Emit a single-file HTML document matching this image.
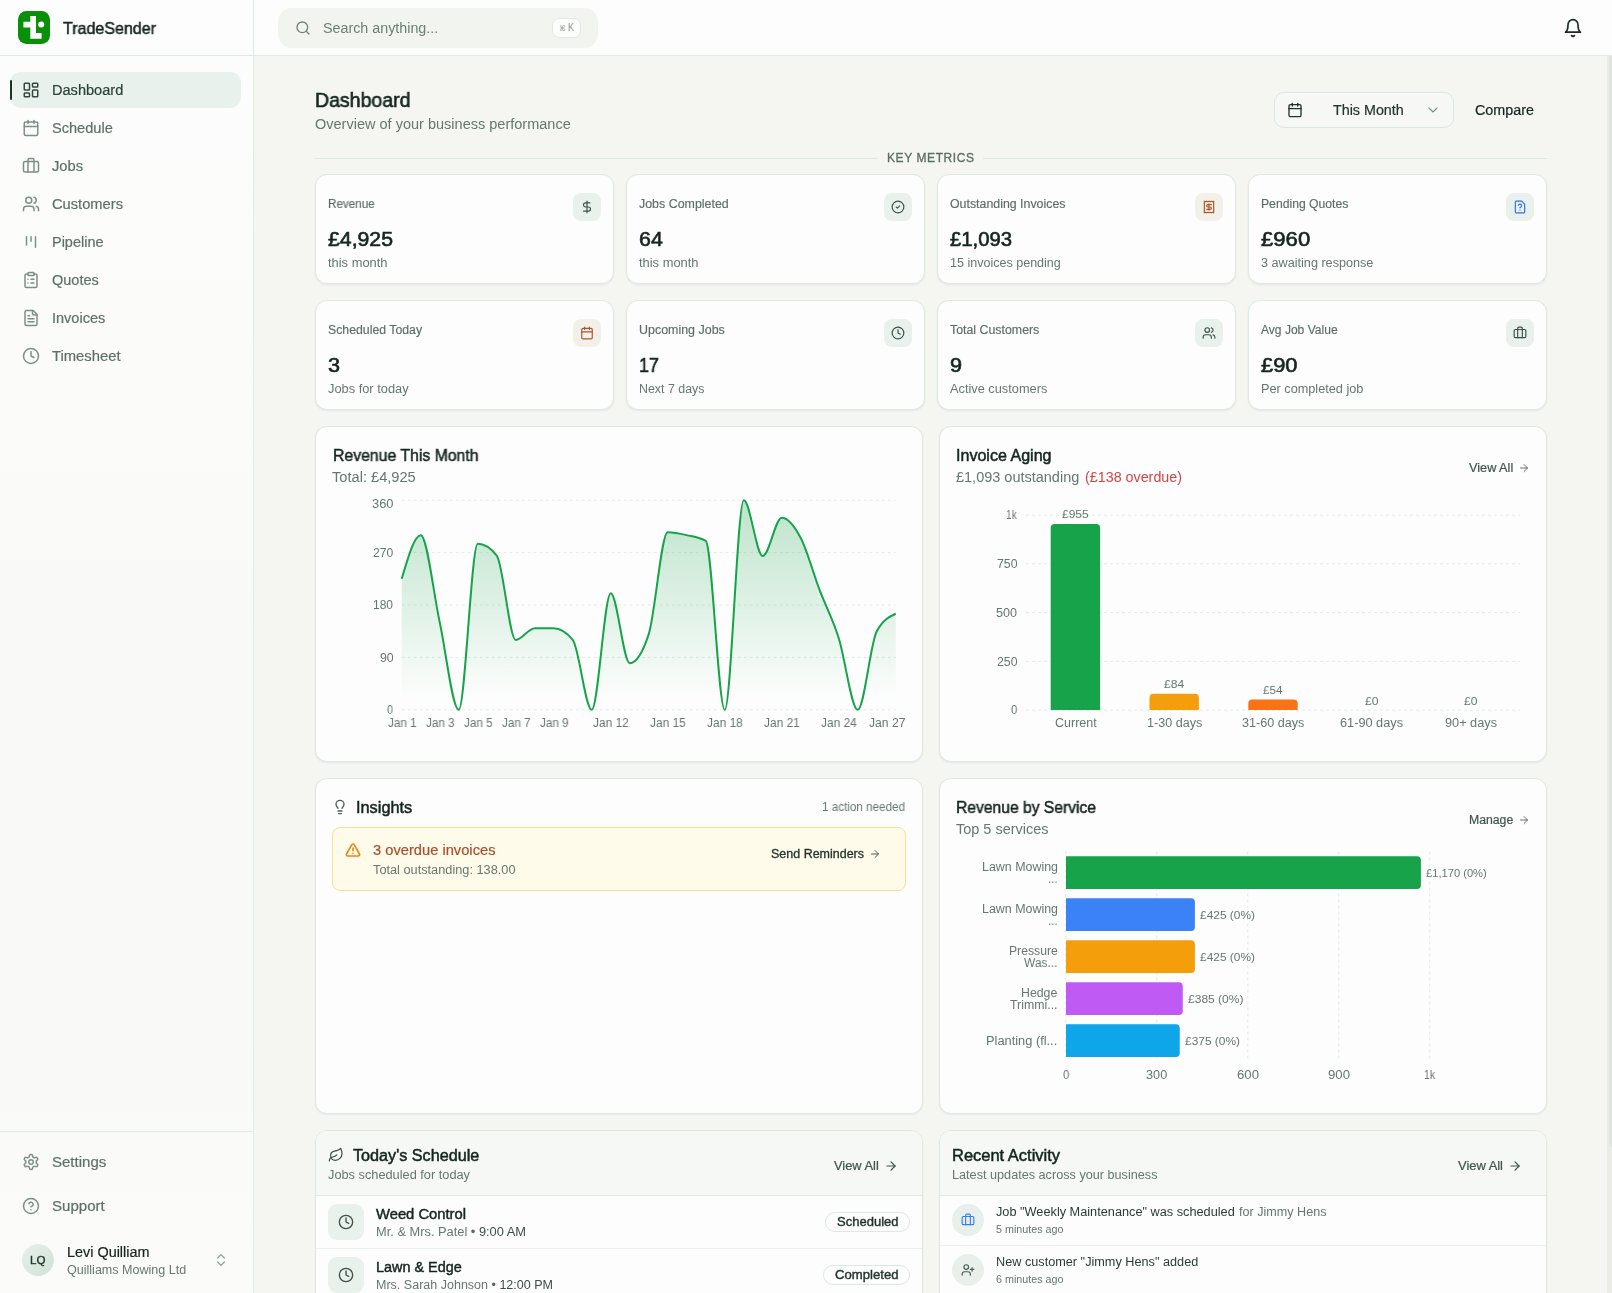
<!DOCTYPE html>
<html lang="en"><head><meta charset="utf-8"><title>Dashboard - TradeSender</title>
<style>
*{box-sizing:border-box;margin:0;padding:0}
html,body{width:1612px;height:1293px;overflow:hidden}
body{position:relative;background:#f5f6f2;font-family:"Liberation Sans","DejaVu Sans",sans-serif;color:#14251f}
.b,.t,.ic,.card,svg.ch{position:absolute}
.t{white-space:nowrap;line-height:1;will-change:transform;transform-origin:0 0}
.card{background:#fdfdfd;border:1px solid #dee9e3;border-radius:12px;box-shadow:0 1px 2px rgba(20,50,40,.05),0 1px 2px rgba(20,50,40,.03)}
.ib{border-radius:8px;background:#e8f1ec}

</style></head>
<body>
<div class="b" style="left:0px;top:0px;width:1612px;height:56px;background:#fcfdfc;border-bottom:1px solid #e1ebe6"></div>
<div class="b" style="left:0px;top:0px;width:254px;height:1293px;background:linear-gradient(180deg,#fcfdfc 0,#fbfcfa 28%,#f9faf7 50%,#f9faf7 80%,#fbfcfa 100%);border-right:1px solid #e1ebe6"></div>
<div class="b" style="left:0px;top:55px;width:253px;height:1px;background:#e1ebe6"></div>
<div class="b" style="left:1607px;top:56px;width:5px;height:1237px;background:#ecece7"></div>
<div class="b" style="left:1609px;top:56px;width:3px;height:1091px;background:#dee8e1;border-radius:0 0 2px 2px"></div>
<svg class="ic" style="left:18px;top:11px" width="32" height="33" viewBox="0 0 32 33"><rect width="32" height="33" rx="8.5" fill="#0a8f08"/><path d="M12.3 5h5.7v5.8h0v11.200h5.600v5.700H12.300V16.500H5.400v-5.700h6.900z" fill="#fdfdfd"/><circle cx="23.200" cy="13.600" r="3" fill="#fdfdfd"/></svg>
<div class="t" id="t_1" style="left:62.50px;top:20.00px;font-size:16.5px;color:#14251f;transform:scaleX(0.9718);-webkit-text-stroke:0.51px #14251f;">TradeSender</div>
<div class="b" style="left:10px;top:72px;width:231px;height:36px;background:#e8f1ec;border-radius:11px"></div>
<div class="b" style="left:10px;top:80px;width:2px;height:20px;background:#1c332a;border-radius:1px"></div>
<svg class="ic" style="left:22px;top:81px" width="18" height="18" viewBox="0 0 24 24" fill="none" stroke="#33483e" stroke-width="2" stroke-linecap="round" stroke-linejoin="round"><rect width="7" height="9" x="3" y="3" rx="1"/><rect width="7" height="5" x="14" y="3" rx="1"/><rect width="7" height="9" x="14" y="12" rx="1"/><rect width="7" height="5" x="3" y="16" rx="1"/></svg>
<div class="t" id="t_2" style="left:52.25px;top:83.00px;font-size:14px;color:#2c4137;transform:scaleX(1.0401);-webkit-text-stroke:0.2px #2c4137;">Dashboard</div>
<svg class="ic" style="left:22px;top:119px" width="18" height="18" viewBox="0 0 24 24" fill="none" stroke="#7c9087" stroke-width="2" stroke-linecap="round" stroke-linejoin="round"><path d="M8 2v4"/><path d="M16 2v4"/><rect width="18" height="18" x="3" y="4" rx="2"/><path d="M3 10h18"/></svg>
<div class="t" id="t_3" style="left:52.25px;top:121.00px;font-size:14px;color:#5d7168;transform:scaleX(1.0404);-webkit-text-stroke:0.2px #5d7168;">Schedule</div>
<svg class="ic" style="left:22px;top:157px" width="18" height="18" viewBox="0 0 24 24" fill="none" stroke="#7c9087" stroke-width="2" stroke-linecap="round" stroke-linejoin="round"><path d="M16 20V4a2 2 0 0 0-2-2h-4a2 2 0 0 0-2 2v16"/><rect width="20" height="14" x="2" y="6" rx="2"/></svg>
<div class="t" id="t_4" style="left:52.25px;top:159.00px;font-size:14px;color:#5d7168;transform:scaleX(1.0481);-webkit-text-stroke:0.2px #5d7168;">Jobs</div>
<svg class="ic" style="left:22px;top:195px" width="18" height="18" viewBox="0 0 24 24" fill="none" stroke="#7c9087" stroke-width="2" stroke-linecap="round" stroke-linejoin="round"><path d="M16 21v-2a4 4 0 0 0-4-4H6a4 4 0 0 0-4 4v2"/><circle cx="9" cy="7" r="4"/><path d="M22 21v-2a4 4 0 0 0-3-3.87"/><path d="M16 3.13a4 4 0 0 1 0 7.75"/></svg>
<div class="t" id="t_5" style="left:52.25px;top:197.00px;font-size:14px;color:#5d7168;transform:scaleX(1.0489);-webkit-text-stroke:0.2px #5d7168;">Customers</div>
<svg class="ic" style="left:22px;top:233px" width="18" height="18" viewBox="0 0 24 24" fill="none" stroke="#7c9087" stroke-width="2" stroke-linecap="round" stroke-linejoin="round"><path d="M6 5v11"/><path d="M12 5v6"/><path d="M18 5v14"/></svg>
<div class="t" id="t_6" style="left:52.25px;top:235.00px;font-size:14px;color:#5d7168;transform:scaleX(1.0336);-webkit-text-stroke:0.2px #5d7168;">Pipeline</div>
<svg class="ic" style="left:22px;top:271px" width="18" height="18" viewBox="0 0 24 24" fill="none" stroke="#7c9087" stroke-width="2" stroke-linecap="round" stroke-linejoin="round"><rect width="8" height="4" x="8" y="2" rx="1" ry="1"/><path d="M16 4h2a2 2 0 0 1 2 2v14a2 2 0 0 1-2 2H6a2 2 0 0 1-2-2V6a2 2 0 0 1 2-2h2"/><path d="M12 11h4"/><path d="M12 16h4"/><path d="M8 11h.01"/><path d="M8 16h.01"/></svg>
<div class="t" id="t_7" style="left:52.25px;top:273.00px;font-size:14px;color:#5d7168;transform:scaleX(1.0357);-webkit-text-stroke:0.2px #5d7168;">Quotes</div>
<svg class="ic" style="left:22px;top:309px" width="18" height="18" viewBox="0 0 24 24" fill="none" stroke="#7c9087" stroke-width="2" stroke-linecap="round" stroke-linejoin="round"><path d="M15 2H6a2 2 0 0 0-2 2v16a2 2 0 0 0 2 2h12a2 2 0 0 0 2-2V7Z"/><path d="M14 2v4a2 2 0 0 0 2 2h4"/><path d="M10 9H8"/><path d="M16 13H8"/><path d="M16 17H8"/></svg>
<div class="t" id="t_8" style="left:52.25px;top:311.00px;font-size:14px;color:#5d7168;transform:scaleX(1.0368);-webkit-text-stroke:0.2px #5d7168;">Invoices</div>
<svg class="ic" style="left:22px;top:347px" width="18" height="18" viewBox="0 0 24 24" fill="none" stroke="#7c9087" stroke-width="2" stroke-linecap="round" stroke-linejoin="round"><circle cx="12" cy="12" r="10"/><polyline points="12 6 12 12 16 14"/></svg>
<div class="t" id="t_9" style="left:52.25px;top:349.00px;font-size:14px;color:#5d7168;transform:scaleX(1.0564);-webkit-text-stroke:0.2px #5d7168;">Timesheet</div>
<div class="b" style="left:0px;top:1131px;width:253px;height:1px;background:#e1ebe6"></div>
<svg class="ic" style="left:22px;top:1153px" width="18" height="18" viewBox="0 0 24 24" fill="none" stroke="#7c9087" stroke-width="2" stroke-linecap="round" stroke-linejoin="round"><path d="M12.22 2h-.44a2 2 0 0 0-2 2v.18a2 2 0 0 1-1 1.73l-.43.25a2 2 0 0 1-2 0l-.15-.08a2 2 0 0 0-2.73.73l-.22.38a2 2 0 0 0 .73 2.73l.15.1a2 2 0 0 1 1 1.72v.51a2 2 0 0 1-1 1.74l-.15.09a2 2 0 0 0-.73 2.73l.22.38a2 2 0 0 0 2.73.73l.15-.08a2 2 0 0 1 2 0l.43.25a2 2 0 0 1 1 1.73V20a2 2 0 0 0 2 2h.44a2 2 0 0 0 2-2v-.18a2 2 0 0 1 1-1.73l.43-.25a2 2 0 0 1 2 0l.15.08a2 2 0 0 0 2.73-.73l.22-.39a2 2 0 0 0-.73-2.73l-.15-.08a2 2 0 0 1-1-1.74v-.5a2 2 0 0 1 1-1.74l.15-.09a2 2 0 0 0 .73-2.73l-.22-.38a2 2 0 0 0-2.73-.73l-.15.08a2 2 0 0 1-2 0l-.43-.25a2 2 0 0 1-1-1.73V4a2 2 0 0 0-2-2z"/><circle cx="12" cy="12" r="3"/></svg>
<div class="t" id="t_10" style="left:52.25px;top:1155.00px;font-size:14px;color:#5d7168;transform:scaleX(1.0723);-webkit-text-stroke:0.2px #5d7168;">Settings</div>
<svg class="ic" style="left:22px;top:1197px" width="18" height="18" viewBox="0 0 24 24" fill="none" stroke="#7c9087" stroke-width="2" stroke-linecap="round" stroke-linejoin="round"><circle cx="12" cy="12" r="10"/><path d="M9.09 9a3 3 0 0 1 5.83 1c0 2-3 3-3 3"/><path d="M12 17h.01"/></svg>
<div class="t" id="t_11" style="left:52.25px;top:1199.00px;font-size:14px;color:#5d7168;transform:scaleX(1.0755);-webkit-text-stroke:0.2px #5d7168;">Support</div>
<div class="b" style="left:22px;top:1244px;width:32px;height:32px;border-radius:50%;background:linear-gradient(135deg,#e6f0ea,#cfe3d8)"></div>
<div class="t" id="t_12" style="left:30.25px;top:1255.00px;font-size:11.5px;color:#22372e;transform:scaleX(1.0102);-webkit-text-stroke:0.37px #22372e;">LQ</div>
<div class="t" id="t_13" style="left:66.50px;top:1245.00px;font-size:14px;color:#14251f;transform:scaleX(1.0294);-webkit-text-stroke:0.2px #14251f;">Levi Quilliam</div>
<div class="t" id="t_14" style="left:66.50px;top:1264.00px;font-size:12px;color:#64786f;transform:scaleX(1.0456);">Quilliams Mowing Ltd</div>
<svg class="ic" style="left:213px;top:1252px" width="16" height="16" viewBox="0 0 24 24" fill="none" stroke="#8a9b93" stroke-width="1.8" stroke-linecap="round" stroke-linejoin="round"><path d="m7 15 5 5 5-5"/><path d="m7 9 5-5 5 5"/></svg>
<div class="b" style="left:278px;top:8px;width:320px;height:40px;background:#f2f4f0;border-radius:14px"></div>
<svg class="ic" style="left:295px;top:20px" width="16" height="16" viewBox="0 0 24 24" fill="none" stroke="#6f837a" stroke-width="2" stroke-linecap="round" stroke-linejoin="round"><circle cx="11" cy="11" r="8"/><path d="m21 21-4.3-4.3"/></svg>
<div class="t" id="t_15" style="left:323.25px;top:21.00px;font-size:14px;color:#6b7f76;transform:scaleX(1.0212);">Search anything...</div>
<div class="b" style="left:552px;top:18px;width:29px;height:20px;background:#fcfdfc;border:1px solid #e1e9e4;border-radius:7px"></div>
<div class="t" id="t_16" style="left:559.20px;top:25.00px;font-size:8px;color:#8d9c95;transform:scaleX(0.8250);">⌘</div>
<div class="t" id="t_17" style="left:568.00px;top:23.00px;font-size:10px;color:#8d9c95;transform:scaleX(0.8993);-webkit-text-stroke:0.15px #8d9c95;">K</div>
<svg class="ic" style="left:1563px;top:18px" width="20" height="20" viewBox="0 0 24 24" fill="none" stroke="#1a2c25" stroke-width="2" stroke-linecap="round" stroke-linejoin="round"><path d="M6 8a6 6 0 0 1 12 0c0 7 3 9 3 9H3s3-2 3-9"/><path d="M10.3 21a1.94 1.94 0 0 0 3.4 0"/></svg>
<div class="t" id="t_18" style="left:315.25px;top:90.00px;font-size:20px;color:#14251f;transform:scaleX(0.9760);-webkit-text-stroke:0.61px #14251f;">Dashboard</div>
<div class="t" id="t_19" style="left:315.00px;top:117.00px;font-size:14px;color:#64786f;transform:scaleX(1.0368);">Overview of your business performance</div>
<div class="b" style="left:1274px;top:92px;width:180px;height:36px;background:#f7f8f5;border:1px solid #dce8e2;border-radius:10px"></div>
<svg class="ic" style="left:1287px;top:102px" width="16" height="16" viewBox="0 0 24 24" fill="none" stroke="#1f332b" stroke-width="2" stroke-linecap="round" stroke-linejoin="round"><path d="M8 2v4"/><path d="M16 2v4"/><rect width="18" height="18" x="3" y="4" rx="2"/><path d="M3 10h18"/></svg>
<div class="t" id="t_20" style="left:1333.25px;top:103.00px;font-size:14px;color:#22362e;transform:scaleX(1.0217);-webkit-text-stroke:0.2px #22362e;">This Month</div>
<svg class="ic" style="left:1425px;top:102px" width="16" height="16" viewBox="0 0 24 24" fill="none" stroke="#7c8f86" stroke-width="1.6" stroke-linecap="round" stroke-linejoin="round"><path d="m6 9 6 6 6-6"/></svg>
<div class="t" id="t_21" style="left:1475.00px;top:103.00px;font-size:14px;color:#14251f;transform:scaleX(1.0244);-webkit-text-stroke:0.2px #14251f;">Compare</div>
<div class="b" style="left:315px;top:158px;width:1232px;height:1px;background:#dce8e2"></div>
<div class="b" style="left:877.5px;top:150px;width:105.5px;height:16px;background:#f5f6f2"></div>
<div class="t" id="t_22" style="left:886.75px;top:152.00px;font-size:12px;color:#5a6e65;letter-spacing:0.586px;-webkit-text-stroke:0.3px #5a6e65;">KEY METRICS</div>
<div class="card" style="left:315px;top:174px;width:299px;height:110px"></div>
<div class="t" id="t_23" style="left:327.75px;top:198.00px;font-size:12px;color:#5a6e65;transform:scaleX(0.9730);-webkit-text-stroke:0.15px #5a6e65;">Revenue</div>
<div class="t" id="t_24" style="left:328.25px;top:229.00px;font-size:20px;color:#14251f;transform:scaleX(1.0626);-webkit-text-stroke:0.61px #14251f;">£4,925</div>
<div class="t" id="t_25" style="left:327.75px;top:257.00px;font-size:12px;color:#64786f;transform:scaleX(1.0748);">this month</div>
<div class="b ib" style="left:573px;top:193px;width:28px;height:28px;background:#e8f1ec"></div>
<svg class="ic" style="left:580px;top:200px" width="14" height="14" viewBox="0 0 24 24" fill="none" stroke="#3c5247" stroke-width="2" stroke-linecap="round" stroke-linejoin="round"><line x1="12" x2="12" y1="2" y2="22"/><path d="M17 5H9.5a3.5 3.5 0 0 0 0 7h5a3.5 3.5 0 0 1 0 7H6"/></svg>
<div class="card" style="left:626px;top:174px;width:299px;height:110px"></div>
<div class="t" id="t_26" style="left:638.75px;top:198.00px;font-size:12px;color:#5a6e65;transform:scaleX(1.0344);-webkit-text-stroke:0.15px #5a6e65;">Jobs Completed</div>
<div class="t" id="t_27" style="left:639.25px;top:229.00px;font-size:20px;color:#14251f;transform:scaleX(1.0697);-webkit-text-stroke:0.61px #14251f;">64</div>
<div class="t" id="t_28" style="left:638.75px;top:257.00px;font-size:12px;color:#64786f;transform:scaleX(1.0748);">this month</div>
<div class="b ib" style="left:884px;top:193px;width:28px;height:28px;background:#e8f1ec"></div>
<svg class="ic" style="left:891px;top:200px" width="14" height="14" viewBox="0 0 24 24" fill="none" stroke="#3c5247" stroke-width="2" stroke-linecap="round" stroke-linejoin="round"><circle cx="12" cy="12" r="10"/><path d="m9 12 2 2 4-4"/></svg>
<div class="card" style="left:937px;top:174px;width:299px;height:110px"></div>
<div class="t" id="t_29" style="left:949.75px;top:198.00px;font-size:12px;color:#5a6e65;transform:scaleX(1.0305);-webkit-text-stroke:0.15px #5a6e65;">Outstanding Invoices</div>
<div class="t" id="t_30" style="left:950.25px;top:229.00px;font-size:20px;color:#14251f;transform:scaleX(1.0135);-webkit-text-stroke:0.61px #14251f;">£1,093</div>
<div class="t" id="t_31" style="left:949.75px;top:257.00px;font-size:12px;color:#64786f;transform:scaleX(1.0445);">15 invoices pending</div>
<div class="b ib" style="left:1195px;top:193px;width:28px;height:28px;background:#f2f1e9"></div>
<svg class="ic" style="left:1202px;top:200px" width="14" height="14" viewBox="0 0 24 24" fill="none" stroke="#b0542c" stroke-width="2" stroke-linecap="round" stroke-linejoin="round"><path d="M4 2v20l2-1 2 1 2-1 2 1 2-1 2 1 2-1 2 1V2l-2 1-2-1-2 1-2-1-2 1-2-1-2 1Z"/><path d="M16 8h-6a2 2 0 1 0 0 4h4a2 2 0 1 1 0 4H8"/><path d="M12 17.5v-11"/></svg>
<div class="card" style="left:1248px;top:174px;width:299px;height:110px"></div>
<div class="t" id="t_32" style="left:1260.75px;top:198.00px;font-size:12px;color:#5a6e65;transform:scaleX(1.0144);-webkit-text-stroke:0.15px #5a6e65;">Pending Quotes</div>
<div class="t" id="t_33" style="left:1261.25px;top:229.00px;font-size:20px;color:#14251f;transform:scaleX(1.1056);-webkit-text-stroke:0.61px #14251f;">£960</div>
<div class="t" id="t_34" style="left:1260.75px;top:257.00px;font-size:12px;color:#64786f;transform:scaleX(1.0531);">3 awaiting response</div>
<div class="b ib" style="left:1506px;top:193px;width:28px;height:28px;background:#e8f1ec"></div>
<svg class="ic" style="left:1513px;top:200px" width="14" height="14" viewBox="0 0 24 24" fill="none" stroke="#2f6fed" stroke-width="2" stroke-linecap="round" stroke-linejoin="round"><path d="M12 17h.01"/><path d="M15 2H6a2 2 0 0 0-2 2v16a2 2 0 0 0 2 2h12a2 2 0 0 0 2-2V7z"/><path d="M9.1 9a3 3 0 0 1 5.82 1c0 2-3 3-3 3"/></svg>
<div class="card" style="left:315px;top:300px;width:299px;height:110px"></div>
<div class="t" id="t_35" style="left:327.75px;top:324.00px;font-size:12px;color:#5a6e65;transform:scaleX(1.0244);-webkit-text-stroke:0.15px #5a6e65;">Scheduled Today</div>
<div class="t" id="t_36" style="left:328.25px;top:355.00px;font-size:20px;color:#14251f;transform:scaleX(1.0800);-webkit-text-stroke:0.61px #14251f;">3</div>
<div class="t" id="t_37" style="left:327.75px;top:383.00px;font-size:12px;color:#64786f;transform:scaleX(1.0693);">Jobs for today</div>
<div class="b ib" style="left:573px;top:319px;width:28px;height:28px;background:#f2f1e9"></div>
<svg class="ic" style="left:580px;top:326px" width="14" height="14" viewBox="0 0 24 24" fill="none" stroke="#b0542c" stroke-width="2" stroke-linecap="round" stroke-linejoin="round"><path d="M8 2v4"/><path d="M16 2v4"/><rect width="18" height="18" x="3" y="4" rx="2"/><path d="M3 10h18"/></svg>
<div class="card" style="left:626px;top:300px;width:299px;height:110px"></div>
<div class="t" id="t_38" style="left:638.75px;top:324.00px;font-size:12px;color:#5a6e65;transform:scaleX(1.0372);-webkit-text-stroke:0.15px #5a6e65;">Upcoming Jobs</div>
<div class="t" id="t_39" style="left:639.25px;top:355.00px;font-size:20px;color:#14251f;transform:scaleX(0.8944);-webkit-text-stroke:0.61px #14251f;">17</div>
<div class="t" id="t_40" style="left:638.75px;top:383.00px;font-size:12px;color:#64786f;transform:scaleX(1.0335);">Next 7 days</div>
<div class="b ib" style="left:884px;top:319px;width:28px;height:28px;background:#e8f1ec"></div>
<svg class="ic" style="left:891px;top:326px" width="14" height="14" viewBox="0 0 24 24" fill="none" stroke="#3c5247" stroke-width="2" stroke-linecap="round" stroke-linejoin="round"><circle cx="12" cy="12" r="10"/><polyline points="12 6 12 12 16 14"/></svg>
<div class="card" style="left:937px;top:300px;width:299px;height:110px"></div>
<div class="t" id="t_41" style="left:949.75px;top:324.00px;font-size:12px;color:#5a6e65;transform:scaleX(1.0300);-webkit-text-stroke:0.15px #5a6e65;">Total Customers</div>
<div class="t" id="t_42" style="left:950.25px;top:355.00px;font-size:20px;color:#14251f;transform:scaleX(1.0800);-webkit-text-stroke:0.61px #14251f;">9</div>
<div class="t" id="t_43" style="left:949.75px;top:383.00px;font-size:12px;color:#64786f;transform:scaleX(1.0650);">Active customers</div>
<div class="b ib" style="left:1195px;top:319px;width:28px;height:28px;background:#e8f1ec"></div>
<svg class="ic" style="left:1202px;top:326px" width="14" height="14" viewBox="0 0 24 24" fill="none" stroke="#3c5247" stroke-width="2" stroke-linecap="round" stroke-linejoin="round"><path d="M16 21v-2a4 4 0 0 0-4-4H6a4 4 0 0 0-4 4v2"/><circle cx="9" cy="7" r="4"/><path d="M22 21v-2a4 4 0 0 0-3-3.87"/><path d="M16 3.13a4 4 0 0 1 0 7.75"/></svg>
<div class="card" style="left:1248px;top:300px;width:299px;height:110px"></div>
<div class="t" id="t_44" style="left:1260.75px;top:324.00px;font-size:12px;color:#5a6e65;transform:scaleX(1.0042);-webkit-text-stroke:0.15px #5a6e65;">Avg Job Value</div>
<div class="t" id="t_45" style="left:1261.25px;top:355.00px;font-size:20px;color:#14251f;transform:scaleX(1.0936);-webkit-text-stroke:0.61px #14251f;">£90</div>
<div class="t" id="t_46" style="left:1260.75px;top:383.00px;font-size:12px;color:#64786f;transform:scaleX(1.0586);">Per completed job</div>
<div class="b ib" style="left:1506px;top:319px;width:28px;height:28px;background:#e8f1ec"></div>
<svg class="ic" style="left:1513px;top:326px" width="14" height="14" viewBox="0 0 24 24" fill="none" stroke="#3c5247" stroke-width="2" stroke-linecap="round" stroke-linejoin="round"><path d="M16 20V4a2 2 0 0 0-2-2h-4a2 2 0 0 0-2 2v16"/><rect width="20" height="14" x="2" y="6" rx="2"/></svg>
<div class="card" style="left:315px;top:426px;width:608px;height:336px;"></div>
<div class="card" style="left:939px;top:426px;width:608px;height:336px;"></div>
<div class="t" id="t_47" style="left:332.50px;top:448.00px;font-size:16px;color:#14251f;transform:scaleX(0.9875);-webkit-text-stroke:0.5px #14251f;">Revenue This Month</div>
<div class="t" id="t_48" style="left:332.00px;top:470.00px;font-size:14px;color:#64786f;transform:scaleX(1.0446);">Total: £4,925</div>
<svg class="ch" style="left:0;top:0" width="1612" height="1293" viewBox="0 0 1612 1293"><defs><linearGradient id="ag" x1="0" y1="0" x2="0" y2="1"><stop offset=".05" stop-color="#16a34a" stop-opacity=".26"/><stop offset=".95" stop-color="#16a34a" stop-opacity="0"/></linearGradient></defs><line x1="401.75" x2="895.75" y1="500.2" y2="500.2" stroke="#e0eae5" stroke-dasharray="3 3"/><line x1="401.75" x2="895.75" y1="552.6" y2="552.6" stroke="#e0eae5" stroke-dasharray="3 3"/><line x1="401.75" x2="895.75" y1="605.0" y2="605.0" stroke="#e0eae5" stroke-dasharray="3 3"/><line x1="401.75" x2="895.75" y1="657.4" y2="657.4" stroke="#e0eae5" stroke-dasharray="3 3"/><line x1="401.75" x2="895.75" y1="709.8" y2="709.8" stroke="#e0eae5" stroke-dasharray="3 3"/><path d="M401.75,578.80C408.08,556.97,414.42,535.13,420.75,535.13C427.08,535.13,433.42,593.36,439.75,622.47C446.08,651.58,452.42,709.80,458.75,709.80C465.08,709.80,471.42,543.87,477.75,543.87C484.08,543.87,490.42,547.75,496.75,555.51C503.08,563.27,509.42,639.93,515.75,639.93C522.08,639.93,528.42,628.29,534.75,628.29C541.08,628.29,547.42,628.29,553.75,628.29C560.08,628.29,566.42,632.17,572.75,639.93C579.08,647.70,585.42,709.80,591.75,709.80C598.08,709.80,604.42,593.36,610.75,593.36C617.08,593.36,623.42,663.22,629.75,663.22C636.08,663.22,642.42,653.52,648.75,634.11C655.08,614.70,661.42,532.22,667.75,532.22C674.08,532.22,680.42,533.68,686.75,535.13C693.08,536.59,699.42,537.07,705.75,540.96C712.08,544.84,718.42,709.80,724.75,709.80C731.08,709.80,737.42,500.20,743.75,500.20C750.08,500.20,756.42,556.09,762.75,556.09C769.08,556.09,775.42,517.67,781.75,517.67C788.08,517.67,794.42,525.91,800.75,538.04C807.08,550.17,813.42,573.75,819.75,590.44C826.08,607.13,832.42,618.29,838.75,638.19C845.08,658.08,851.42,709.80,857.75,709.80C864.08,709.80,870.42,642.84,876.75,631.20C883.08,619.56,889.42,616.64,895.75,613.73L895.75,709.8L401.75,709.8Z" fill="url(#ag)"/><path d="M401.75,578.80C408.08,556.97,414.42,535.13,420.75,535.13C427.08,535.13,433.42,593.36,439.75,622.47C446.08,651.58,452.42,709.80,458.75,709.80C465.08,709.80,471.42,543.87,477.75,543.87C484.08,543.87,490.42,547.75,496.75,555.51C503.08,563.27,509.42,639.93,515.75,639.93C522.08,639.93,528.42,628.29,534.75,628.29C541.08,628.29,547.42,628.29,553.75,628.29C560.08,628.29,566.42,632.17,572.75,639.93C579.08,647.70,585.42,709.80,591.75,709.80C598.08,709.80,604.42,593.36,610.75,593.36C617.08,593.36,623.42,663.22,629.75,663.22C636.08,663.22,642.42,653.52,648.75,634.11C655.08,614.70,661.42,532.22,667.75,532.22C674.08,532.22,680.42,533.68,686.75,535.13C693.08,536.59,699.42,537.07,705.75,540.96C712.08,544.84,718.42,709.80,724.75,709.80C731.08,709.80,737.42,500.20,743.75,500.20C750.08,500.20,756.42,556.09,762.75,556.09C769.08,556.09,775.42,517.67,781.75,517.67C788.08,517.67,794.42,525.91,800.75,538.04C807.08,550.17,813.42,573.75,819.75,590.44C826.08,607.13,832.42,618.29,838.75,638.19C845.08,658.08,851.42,709.80,857.75,709.80C864.08,709.80,870.42,642.84,876.75,631.20C883.08,619.56,889.42,616.64,895.75,613.73" fill="none" stroke="#16a34a" stroke-width="2" stroke-linejoin="round"/><line x1="1026" x2="1520" y1="515.1" y2="515.1" stroke="#e0eae5" stroke-dasharray="3 3"/><line x1="1026" x2="1520" y1="563.85" y2="563.85" stroke="#e0eae5" stroke-dasharray="3 3"/><line x1="1026" x2="1520" y1="612.6" y2="612.6" stroke="#e0eae5" stroke-dasharray="3 3"/><line x1="1026" x2="1520" y1="661.35" y2="661.35" stroke="#e0eae5" stroke-dasharray="3 3"/><line x1="1026" x2="1520" y1="710.1" y2="710.1" stroke="#e0eae5" stroke-dasharray="3 3"/><path d="M1050.7,710.1V527.88a4,4 0 0 1 4,-4H1096.1000000000001a4,4 0 0 1 4,4V710.1Z" fill="#16a34a"/><path d="M1149.5,710.1V697.72a4,4 0 0 1 4,-4H1194.9a4,4 0 0 1 4,4V710.1Z" fill="#f59e0b"/><path d="M1248.3,710.1V703.57a4,4 0 0 1 4,-4H1293.7a4,4 0 0 1 4,4V710.1Z" fill="#f97316"/></svg>
<div class="t" id="t_49" style="left:371.80px;top:498.00px;font-size:12px;color:#64786f;transform:scaleX(1.0733);">360</div>
<div class="t" id="t_50" style="left:373.05px;top:547.00px;font-size:12px;color:#64786f;transform:scaleX(1.0109);">270</div>
<div class="t" id="t_51" style="left:373.30px;top:599.00px;font-size:12px;color:#64786f;">180</div>
<div class="t" id="t_52" style="left:379.55px;top:652.00px;font-size:12px;color:#64786f;transform:scaleX(1.0292);">90</div>
<div class="t" id="t_53" style="left:387.30px;top:704.00px;font-size:12px;color:#64786f;transform:scaleX(0.8972);">0</div>
<div class="t" id="t_54" style="left:387.50px;top:717.00px;font-size:12px;color:#64786f;transform:scaleX(0.9707);">Jan 1</div>
<div class="t" id="t_55" style="left:425.50px;top:717.00px;font-size:12px;color:#64786f;transform:scaleX(0.9707);">Jan 3</div>
<div class="t" id="t_56" style="left:463.50px;top:717.00px;font-size:12px;color:#64786f;transform:scaleX(0.9707);">Jan 5</div>
<div class="t" id="t_57" style="left:501.50px;top:717.00px;font-size:12px;color:#64786f;transform:scaleX(0.9707);">Jan 7</div>
<div class="t" id="t_58" style="left:539.50px;top:717.00px;font-size:12px;color:#64786f;transform:scaleX(0.9707);">Jan 9</div>
<div class="t" id="t_59" style="left:592.88px;top:717.00px;font-size:12px;color:#64786f;transform:scaleX(0.9922);">Jan 12</div>
<div class="t" id="t_60" style="left:649.88px;top:717.00px;font-size:12px;color:#64786f;transform:scaleX(0.9922);">Jan 15</div>
<div class="t" id="t_61" style="left:706.88px;top:717.00px;font-size:12px;color:#64786f;transform:scaleX(0.9922);">Jan 18</div>
<div class="t" id="t_62" style="left:763.88px;top:717.00px;font-size:12px;color:#64786f;transform:scaleX(0.9922);">Jan 21</div>
<div class="t" id="t_63" style="left:820.88px;top:717.00px;font-size:12px;color:#64786f;transform:scaleX(0.9922);">Jan 24</div>
<div class="t" id="t_64" style="left:868.80px;top:717.00px;font-size:12px;color:#64786f;transform:scaleX(1.0130);">Jan 27</div>
<div class="t" id="t_65" style="left:956.25px;top:448.00px;font-size:16px;color:#14251f;transform:scaleX(1.0033);-webkit-text-stroke:0.5px #14251f;">Invoice Aging</div>
<div class="t" id="t_66" style="left:956.00px;top:470.00px;font-size:14px;color:#64786f;transform:scaleX(1.0348);">£1,093 outstanding</div>
<div class="t" id="t_67" style="left:1085.00px;top:470.00px;font-size:14px;color:#d24545;transform:scaleX(1.0216);">(£138 overdue)</div>
<div class="t" id="t_68" style="left:1469.00px;top:462.00px;font-size:12px;color:#42574d;transform:scaleX(1.0583);-webkit-text-stroke:0.22px #42574d;">View All</div>
<svg class="ic" style="left:1518px;top:461.75px" width="12" height="12" viewBox="0 0 24 24" fill="none" stroke="#5d7168" stroke-width="2" stroke-linecap="round" stroke-linejoin="round"><path d="M5 12h14"/><path d="m12 5 7 7-7 7"/></svg>
<div class="t" id="t_69" style="left:1006.45px;top:509.00px;font-size:12px;color:#64786f;transform:scaleX(0.8473);">1k</div>
<div class="t" id="t_70" style="left:996.70px;top:558.00px;font-size:12px;color:#64786f;transform:scaleX(1.0234);">750</div>
<div class="t" id="t_71" style="left:996.20px;top:607.00px;font-size:12px;color:#64786f;transform:scaleX(1.0484);">500</div>
<div class="t" id="t_72" style="left:996.70px;top:656.00px;font-size:12px;color:#64786f;transform:scaleX(1.0234);">250</div>
<div class="t" id="t_73" style="left:1010.95px;top:704.00px;font-size:12px;color:#64786f;transform:scaleX(0.9346);">0</div>
<div class="t" id="t_74" style="left:1054.53px;top:717.00px;font-size:12px;color:#64786f;transform:scaleX(1.0433);">Current</div>
<div class="t" id="t_75" style="left:1062.03px;top:509.00px;font-size:11px;color:#64786f;transform:scaleX(1.0925);">£955</div>
<div class="t" id="t_76" style="left:1146.58px;top:717.00px;font-size:12px;color:#64786f;transform:scaleX(1.0483);">1-30 days</div>
<div class="t" id="t_77" style="left:1164.08px;top:679.00px;font-size:11px;color:#64786f;transform:scaleX(1.1030);">£84</div>
<div class="t" id="t_78" style="left:1241.88px;top:717.00px;font-size:12px;color:#64786f;transform:scaleX(1.0484);">31-60 days</div>
<div class="t" id="t_79" style="left:1263.25px;top:685.00px;font-size:11px;color:#64786f;transform:scaleX(1.0621);">£54</div>
<div class="t" id="t_80" style="left:1340.30px;top:717.00px;font-size:12px;color:#64786f;transform:scaleX(1.0611);">61-90 days</div>
<div class="t" id="t_81" style="left:1365.05px;top:696.00px;font-size:11px;color:#64786f;transform:scaleX(1.1020);">£0</div>
<div class="t" id="t_82" style="left:1444.60px;top:717.00px;font-size:12px;color:#64786f;transform:scaleX(1.0602);">90+ days</div>
<div class="t" id="t_83" style="left:1463.85px;top:696.00px;font-size:11px;color:#64786f;transform:scaleX(1.1020);">£0</div>
<div class="card" style="left:315px;top:778px;width:608px;height:336px;"></div>
<div class="card" style="left:939px;top:778px;width:608px;height:336px;"></div>
<svg class="ic" style="left:332px;top:799px" width="16" height="16" viewBox="0 0 24 24" fill="none" stroke="#4a5f55" stroke-width="2" stroke-linecap="round" stroke-linejoin="round"><path d="M15 14c.2-1 .7-1.7 1.5-2.5 1-.9 1.5-2.2 1.5-3.5A6 6 0 0 0 6 8c0 1 .2 2.2 1.5 3.5.7.7 1.3 1.5 1.5 2.5"/><path d="M9 18h6"/><path d="M10 22h4"/></svg>
<div class="t" id="t_84" style="left:356.25px;top:800.00px;font-size:16px;color:#14251f;transform:scaleX(1.0201);-webkit-text-stroke:0.5px #14251f;">Insights</div>
<div class="t" id="t_85" style="left:822.25px;top:801.00px;font-size:12px;color:#64786f;transform:scaleX(0.9718);">1 action needed</div>
<div class="b" style="left:332px;top:827px;width:574px;height:64px;background:#fffbeb;border:1px solid #fbe18f;border-radius:8px"></div>
<svg class="ic" style="left:345px;top:842px" width="16" height="16" viewBox="0 0 24 24" fill="none" stroke="#f0820f" stroke-width="2.4" stroke-linecap="round" stroke-linejoin="round"><path d="m21.73 18-8-14a2 2 0 0 0-3.48 0l-8 14A2 2 0 0 0 4 21h16a2 2 0 0 0 1.73-3"/><path d="M12 9v4"/><path d="M12 17h.01"/></svg>
<div class="t" id="t_86" style="left:373.00px;top:843.00px;font-size:14px;color:#a5502c;transform:scaleX(1.0493);-webkit-text-stroke:0.2px #a5502c;">3 overdue invoices</div>
<div class="t" id="t_87" style="left:373.00px;top:864.00px;font-size:12px;color:#64786f;transform:scaleX(1.0626);">Total outstanding: 138.00</div>
<div class="t" id="t_88" style="left:770.75px;top:848.00px;font-size:12px;color:#1f332b;transform:scaleX(1.0404);-webkit-text-stroke:0.32px #1f332b;">Send Reminders</div>
<svg class="ic" style="left:869px;top:848px" width="12" height="12" viewBox="0 0 24 24" fill="none" stroke="#4a5f55" stroke-width="2" stroke-linecap="round" stroke-linejoin="round"><path d="M5 12h14"/><path d="m12 5 7 7-7 7"/></svg>
<div class="t" id="t_89" style="left:956.25px;top:800.00px;font-size:16px;color:#14251f;transform:scaleX(0.9777);-webkit-text-stroke:0.5px #14251f;">Revenue by Service</div>
<div class="t" id="t_90" style="left:956.00px;top:822.00px;font-size:14px;color:#64786f;transform:scaleX(1.0337);">Top 5 services</div>
<div class="t" id="t_91" style="left:1469.00px;top:814.00px;font-size:12px;color:#42574d;transform:scaleX(1.0202);-webkit-text-stroke:0.22px #42574d;">Manage</div>
<svg class="ic" style="left:1518px;top:814px" width="12" height="12" viewBox="0 0 24 24" fill="none" stroke="#5d7168" stroke-width="2" stroke-linecap="round" stroke-linejoin="round"><path d="M5 12h14"/><path d="m12 5 7 7-7 7"/></svg>
<svg class="ch" style="left:0;top:0" width="1612" height="1293" viewBox="0 0 1612 1293"><line x1="1065.75" x2="1065.75" y1="851.5" y2="1061.5" stroke="#e0eae5" stroke-dasharray="3 3"/><line x1="1156.75" x2="1156.75" y1="851.5" y2="1061.5" stroke="#e0eae5" stroke-dasharray="3 3"/><line x1="1247.75" x2="1247.75" y1="851.5" y2="1061.5" stroke="#e0eae5" stroke-dasharray="3 3"/><line x1="1338.75" x2="1338.75" y1="851.5" y2="1061.5" stroke="#e0eae5" stroke-dasharray="3 3"/><line x1="1429.75" x2="1429.75" y1="851.5" y2="1061.5" stroke="#e0eae5" stroke-dasharray="3 3"/><path d="M1066.0,856.25H1416.9a4,4 0 0 1 4,4V885.0a4,4 0 0 1 -4,4H1066.0Z" fill="#16a34a"/><path d="M1066.0,898.25H1190.92a4,4 0 0 1 4,4V927.0a4,4 0 0 1 -4,4H1066.0Z" fill="#3b82f6"/><path d="M1066.0,940.25H1190.92a4,4 0 0 1 4,4V969.0a4,4 0 0 1 -4,4H1066.0Z" fill="#f59e0b"/><path d="M1066.0,982.25H1178.78a4,4 0 0 1 4,4V1011.0a4,4 0 0 1 -4,4H1066.0Z" fill="#c05af5"/><path d="M1066.0,1024.25H1175.75a4,4 0 0 1 4,4V1053.0a4,4 0 0 1 -4,4H1066.0Z" fill="#0ea5e9"/></svg>
<div class="t" id="t_92" style="left:981.50px;top:861.00px;font-size:12px;color:#64786f;transform:scaleX(1.0358);">Lawn Mowing</div>
<div class="t" id="t_93" style="left:1048.00px;top:873.00px;font-size:12px;color:#64786f;transform:scaleX(0.9485);">...</div>
<div class="t" id="t_94" style="left:1426.15px;top:868.00px;font-size:11px;color:#64786f;transform:scaleX(1.0136);">£1,170 (0%)</div>
<div class="t" id="t_95" style="left:981.50px;top:903.00px;font-size:12px;color:#64786f;transform:scaleX(1.0358);">Lawn Mowing</div>
<div class="t" id="t_96" style="left:1048.00px;top:915.00px;font-size:12px;color:#64786f;transform:scaleX(0.9485);">...</div>
<div class="t" id="t_97" style="left:1200.17px;top:910.00px;font-size:11px;color:#64786f;transform:scaleX(1.0834);">£425 (0%)</div>
<div class="t" id="t_98" style="left:1008.75px;top:945.00px;font-size:12px;color:#64786f;transform:scaleX(1.0150);">Pressure</div>
<div class="t" id="t_99" style="left:1024.25px;top:957.00px;font-size:12px;color:#64786f;transform:scaleX(0.9907);">Was...</div>
<div class="t" id="t_100" style="left:1200.17px;top:952.00px;font-size:11px;color:#64786f;transform:scaleX(1.0834);">£425 (0%)</div>
<div class="t" id="t_101" style="left:1021.25px;top:987.00px;font-size:12px;color:#64786f;transform:scaleX(1.0247);">Hedge</div>
<div class="t" id="t_102" style="left:1010.00px;top:999.00px;font-size:12px;color:#64786f;transform:scaleX(1.0277);">Trimmi...</div>
<div class="t" id="t_103" style="left:1188.03px;top:994.00px;font-size:11px;color:#64786f;transform:scaleX(1.0933);">£385 (0%)</div>
<div class="t" id="t_104" style="left:986.25px;top:1035.00px;font-size:12px;color:#64786f;transform:scaleX(1.0682);">Planting (fl...</div>
<div class="t" id="t_105" style="left:1185.00px;top:1036.00px;font-size:11px;color:#64786f;transform:scaleX(1.0834);">£375 (0%)</div>
<div class="t" id="t_106" style="left:1062.62px;top:1069.00px;font-size:12px;color:#64786f;transform:scaleX(0.9346);">0</div>
<div class="t" id="t_107" style="left:1146.12px;top:1069.00px;font-size:12px;color:#64786f;transform:scaleX(1.0608);">300</div>
<div class="t" id="t_108" style="left:1236.75px;top:1069.00px;font-size:12px;color:#64786f;transform:scaleX(1.0983);">600</div>
<div class="t" id="t_109" style="left:1327.75px;top:1069.00px;font-size:12px;color:#64786f;transform:scaleX(1.0983);">900</div>
<div class="t" id="t_110" style="left:1424.25px;top:1069.00px;font-size:12px;color:#64786f;transform:scaleX(0.8670);">1k</div>
<div class="card" style="left:315px;top:1130px;width:608px;height:200px;overflow:hidden;border-radius:12px 12px 0 0"><div style="height:65px;background:#f5f8f4;border-bottom:1px solid #e3ece7"></div></div>
<div class="card" style="left:939px;top:1130px;width:608px;height:200px;overflow:hidden;border-radius:12px 12px 0 0"><div style="height:65px;background:#f5f8f4;border-bottom:1px solid #e3ece7"></div></div>
<svg class="ic" style="left:328px;top:1147px" width="16" height="16" viewBox="0 0 24 24" fill="none" stroke="#3c5247" stroke-width="1.8" stroke-linecap="round" stroke-linejoin="round"><path d="M11 20A7 7 0 0 1 9.8 6.1C15.5 5 17 4.48 19 2c1 2 2 4.18 2 8 0 5.500-4.78 10-10 10Z"/><path d="M2 21c0-3 1.85-5.360 5.080-6C9.500 14.520 12 13 13 12"/></svg>
<div class="t" id="t_111" style="left:352.50px;top:1148.00px;font-size:16px;color:#14251f;transform:scaleX(1.0106);-webkit-text-stroke:0.5px #14251f;">Today's Schedule</div>
<div class="t" id="t_112" style="left:328.00px;top:1169.00px;font-size:12px;color:#64786f;transform:scaleX(1.0643);">Jobs scheduled for today</div>
<div class="t" id="t_113" style="left:834.25px;top:1160.00px;font-size:12px;color:#42574d;transform:scaleX(1.0703);-webkit-text-stroke:0.22px #42574d;">View All</div>
<svg class="ic" style="left:884px;top:1159px" width="14" height="14" viewBox="0 0 24 24" fill="none" stroke="#3c5247" stroke-width="2.1" stroke-linecap="round" stroke-linejoin="round"><path d="M5 12h14"/><path d="m12 5 7 7-7 7"/></svg>
<div class="b" style="left:316px;top:1248px;width:606px;height:1px;background:#ecf1ee"></div>
<div class="b" style="left:328px;top:1204px;width:36px;height:36px;background:#e8f1ec;border-radius:9px"></div>
<svg class="ic" style="left:338px;top:1214px" width="16" height="16" viewBox="0 0 24 24" fill="none" stroke="#3c5247" stroke-width="2" stroke-linecap="round" stroke-linejoin="round"><circle cx="12" cy="12" r="10"/><polyline points="12 6 12 12 16 14"/></svg>
<div class="t" id="t_114" style="left:376.25px;top:1207.00px;font-size:14px;color:#14251f;transform:scaleX(1.0546);-webkit-text-stroke:0.44px #14251f;">Weed Control</div>
<div class="t" id="t_115" style="left:376.00px;top:1226.00px;font-size:12px;color:#64786f;transform:scaleX(1.0694);">Mr. & Mrs. Patel <span style="color:#55695f">•</span> <span style="color:#3a4f46">9:00 AM</span></div>
<div class="b" style="left:825px;top:1212px;width:85px;height:20px;background:#fdfdfd;border:1px solid #dce8e2;border-radius:10px"></div>
<div class="t" id="t_116" style="left:836.50px;top:1216.00px;font-size:12px;color:#1f332b;transform:scaleX(1.0843);-webkit-text-stroke:0.39px #1f332b;">Scheduled</div>
<div class="b" style="left:328px;top:1257px;width:36px;height:36px;background:#e8f1ec;border-radius:9px"></div>
<svg class="ic" style="left:338px;top:1267px" width="16" height="16" viewBox="0 0 24 24" fill="none" stroke="#3c5247" stroke-width="2" stroke-linecap="round" stroke-linejoin="round"><circle cx="12" cy="12" r="10"/><polyline points="12 6 12 12 16 14"/></svg>
<div class="t" id="t_117" style="left:376.25px;top:1260.00px;font-size:14px;color:#14251f;transform:scaleX(1.0295);-webkit-text-stroke:0.44px #14251f;">Lawn &amp; Edge</div>
<div class="t" id="t_118" style="left:376.00px;top:1279.00px;font-size:12px;color:#64786f;transform:scaleX(1.0434);">Mrs. Sarah Johnson <span style="color:#55695f">•</span> <span style="color:#3a4f46">12:00 PM</span></div>
<div class="b" style="left:823px;top:1265px;width:87px;height:20px;background:#fdfdfd;border:1px solid #dce8e2;border-radius:10px"></div>
<div class="t" id="t_119" style="left:834.50px;top:1269.00px;font-size:12px;color:#1f332b;transform:scaleX(1.0942);-webkit-text-stroke:0.39px #1f332b;">Completed</div>
<div class="t" id="t_120" style="left:952.00px;top:1148.00px;font-size:16px;color:#14251f;transform:scaleX(1.0292);-webkit-text-stroke:0.5px #14251f;">Recent Activity</div>
<div class="t" id="t_121" style="left:952.00px;top:1169.00px;font-size:12px;color:#64786f;transform:scaleX(1.0550);">Latest updates across your business</div>
<div class="t" id="t_122" style="left:1458.00px;top:1160.00px;font-size:12px;color:#42574d;transform:scaleX(1.0762);-webkit-text-stroke:0.22px #42574d;">View All</div>
<svg class="ic" style="left:1508px;top:1159px" width="14" height="14" viewBox="0 0 24 24" fill="none" stroke="#3c5247" stroke-width="2.1" stroke-linecap="round" stroke-linejoin="round"><path d="M5 12h14"/><path d="m12 5 7 7-7 7"/></svg>
<div class="b" style="left:940px;top:1245px;width:606px;height:1px;background:#ecf1ee"></div>
<div class="b" style="left:952px;top:1204px;width:32px;height:32px;background:#e9efea;border-radius:50%"></div>
<svg class="ic" style="left:961px;top:1213px" width="14" height="14" viewBox="0 0 24 24" fill="none" stroke="#3b7cf0" stroke-width="2" stroke-linecap="round" stroke-linejoin="round"><path d="M16 20V4a2 2 0 0 0-2-2h-4a2 2 0 0 0-2 2v16"/><rect width="20" height="14" x="2" y="6" rx="2"/></svg>
<div class="t" id="t_123" style="left:995.75px;top:1206.00px;font-size:12px;color:#2a3d35;transform:scaleX(1.0607);">Job "Weekly Maintenance" was scheduled</div>
<div class="t" id="t_124" style="left:1238.75px;top:1206.00px;font-size:12px;color:#64786f;transform:scaleX(1.0499);">for Jimmy Hens</div>
<div class="t" id="t_125" style="left:995.75px;top:1225.00px;font-size:10px;color:#64786f;transform:scaleX(1.0744);">5 minutes ago</div>
<div class="b" style="left:952px;top:1254px;width:32px;height:32px;background:#e9efea;border-radius:50%"></div>
<svg class="ic" style="left:961px;top:1263px" width="14" height="14" viewBox="0 0 24 24" fill="none" stroke="#4a5f55" stroke-width="2" stroke-linecap="round" stroke-linejoin="round"><path d="M16 21v-2a4 4 0 0 0-4-4H6a4 4 0 0 0-4 4v2"/><circle cx="9" cy="7" r="4"/><line x1="19" x2="19" y1="8" y2="14"/><line x1="22" x2="16" y1="11" y2="11"/></svg>
<div class="t" id="t_126" style="left:995.75px;top:1256.00px;font-size:12px;color:#2a3d35;transform:scaleX(1.0575);">New customer "Jimmy Hens" added</div>
<div class="t" id="t_127" style="left:995.75px;top:1275.00px;font-size:10px;color:#64786f;transform:scaleX(1.0744);">6 minutes ago</div>
</body></html>
